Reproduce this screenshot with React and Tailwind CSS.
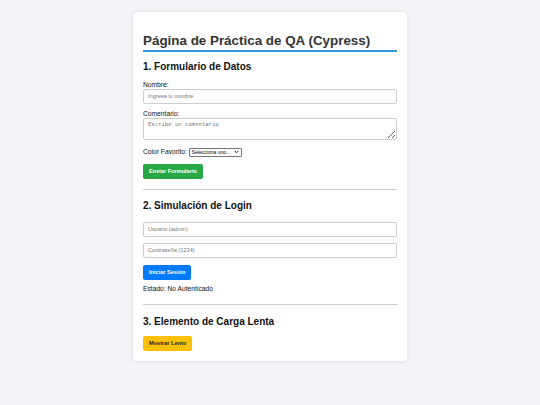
export default function App() {
  const font = { fontFamily: '"Liberation Sans", Arial, sans-serif' };
  const inputCls =
    "block h-[15px] w-full rounded-[2px] border border-[#ccc] bg-white px-[4px] text-[5.6px] text-[#333] placeholder:text-[#777] outline-none";
  return (
    <div className="min-h-[405px] w-full bg-[#f4f4f9] pt-[12px]" style={font}>
      <div className="mx-auto w-[274px] rounded-[4px] bg-white px-[10px] pt-[21px] pb-[10px] shadow-[0_0_5px_rgba(0,0,0,0.1)] text-[#333]">
        <h1 className="pb-[1px] text-[13.4px] font-bold leading-[16px] whitespace-nowrap text-[#333]">
          Página de Práctica de QA (Cypress)
        </h1>
        <div className="h-[1.5px] w-full bg-[#3498db]" />

        <h2 className="mt-[9px] text-[10px] font-bold leading-[12px] text-[#111]">1. Formulario de Datos</h2>
        <div className="mt-[8px] text-[6.7px] leading-[8px] text-[#111]">Nombre:</div>
        <input className={inputCls} placeholder="Ingresa tu nombre" />
        <div className="mt-[6px] text-[6.7px] leading-[8px] text-[#111]">Comentario:</div>
        <textarea
          className="block h-[22px] w-full resize-y rounded-[2px] border border-[#ccc] bg-white px-[4px] py-[2px] text-[5.6px] leading-[7px] placeholder:text-[#777] outline-none"
          style={{ fontFamily: '"DejaVu Sans Mono", monospace' }}
          placeholder="Escribe un comentario"
        />
        <div className="mt-[8px] flex h-[9px] items-center gap-[2px] text-[6.7px] leading-[8px] text-[#111]">
          <span className="whitespace-nowrap">Color Favorito:</span>
          <div className="flex h-[9px] w-[53px] items-center justify-between rounded-[1px] border border-[#767676] bg-white pl-[2px] pr-[2px] text-[5px] leading-none whitespace-nowrap text-black">
            <span>Selecciona uno...</span>
            <svg width="5" height="4" viewBox="0 0 10 8">
              <path d="M1.5 2 L5 5.5 L8.5 2" fill="none" stroke="#000" strokeWidth="1.8" />
            </svg>
          </div>
        </div>
        <button className="mt-[7px] flex h-[15px] items-center justify-center rounded-[2px] bg-[#28a745] px-[6px] text-[5.6px] font-bold whitespace-nowrap text-white">
          Enviar Formulario
        </button>

        <div className="mt-[10px] h-px w-full bg-[#ccc]" />

        <h2 className="mt-[10px] text-[10px] font-bold leading-[12px] text-[#111]">2. Simulación de Login</h2>
        <input className={`mt-[10px] ${inputCls}`} placeholder="Usuario (admin)" />
        <input className={`mt-[6px] ${inputCls}`} placeholder="Contraseña (1234)" />
        <button className="mt-[7px] flex h-[15px] items-center justify-center rounded-[2px] bg-[#007bff] px-[6px] text-[5.6px] font-bold whitespace-nowrap text-white">
          Iniciar Sesión
        </button>
        <div className="mt-[5px] text-[6.7px] leading-[8px] text-[#111]">Estado: No Autenticado</div>

        <div className="mt-[11px] h-px w-full bg-[#ccc]" />

        <h2 className="mt-[11px] text-[10px] font-bold leading-[12px] text-[#111]">3. Elemento de Carga Lenta</h2>
        <button className="mt-[8px] flex h-[15px] items-center justify-center rounded-[2px] bg-[#ffc107] px-[6px] text-[5.6px] font-bold whitespace-nowrap text-[#222]">
          Mostrar Lento
        </button>
      </div>
    </div>
  );
}
